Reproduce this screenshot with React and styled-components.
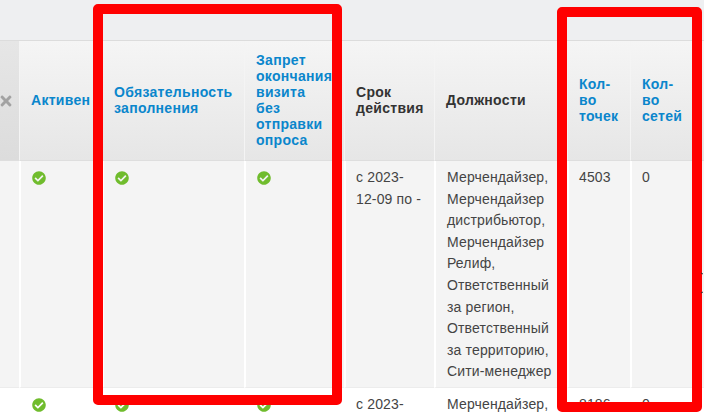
import React from 'react';
import styled, { createGlobalStyle } from 'styled-components';
import { FaCheckCircle, FaTimes } from 'react-icons/fa';

const GlobalStyle = createGlobalStyle`
  html, body {
    margin: 0;
    padding: 0;
    background: #fff;
    overflow: hidden;
  }
`;

const Page = styled.div`
  position: relative;
  width: 704px;
  height: 413px;
  overflow: hidden;
  background: #eeeff1;
  font-family: "Liberation Sans", Arial, sans-serif;
`;

const TableArea = styled.div`
  padding-top: 40px;
`;

const Table = styled.table`
  table-layout: fixed;
  width: 704px;
  border-collapse: separate;
  border-spacing: 0;
  background: #fff;
  border-top: 1px solid #dcdcdc;
`;

const HeadCell = styled.th`
  height: 120px;
  box-sizing: border-box;
  padding: 10px 0 12px 11px;
  text-align: left;
  vertical-align: middle;
  font-size: 14px;
  line-height: 16px;
  font-weight: 700;
  letter-spacing: 0.3px;
  color: ${props => (props.$link ? '#0a86cc' : '#333')};
  background: linear-gradient(#f5f5f5, #e6e6e6);
  border-left: 1px solid #f4f4f4;
  border-bottom: 1px solid #dedede;
`;

const HeadLine = styled.span`
  display: block;
  white-space: nowrap;
`;

const ActionHead = styled(HeadCell)`
  padding: 0;
  background: linear-gradient(#e6e6e6, #dcdcdc);
  border-left: 0;
  color: #a2a2a2;
  font-size: 16px;
  overflow: hidden;
`;

const Cell = styled.td`
  box-sizing: border-box;
  padding: 6px 10px 4px ${props => (props.$wide ? 11 : 10)}px;
  vertical-align: top;
  font-size: 14px;
  line-height: 21.6px;
  letter-spacing: 0.15px;
  color: #444;
  background: ${props => (props.$plain ? '#fff' : '#f4f4f4')};
  border-left: 2px solid #fff;
  border-bottom: 1px solid ${props => (props.$plain ? '#fff' : '#ececec')};
`;

const FirstCell = styled(Cell)`
  padding: 0;
  border-left: 0;
`;

const RemoveIcon = styled(FaTimes)`
  display: block;
  margin-left: -2px;
`;

const CheckIcon = styled(FaCheckCircle)`
  display: block;
  margin-top: 4px;
  margin-left: 1px;
  width: 14px;
  height: 14px;
  color: #70bc2d;
`;

const Highlight = styled.div`
  position: absolute;
  left: ${props => props.$left}px;
  top: ${props => props.$top}px;
  width: ${props => props.$width}px;
  height: ${props => props.$height}px;
  box-sizing: border-box;
  border: 10px solid #ff0000;
  border-radius: 5px;
`;

const CursorMark = styled.svg`
  position: absolute;
  left: 699px;
  top: 270px;
`;

const columns = [
  { lines: ['Активен'], link: true, width: 83 },
  { lines: ['Обязательность', 'заполнения'], link: true, width: 142 },
  { lines: ['Запрет', 'окончания', 'визита', 'без', 'отправки', 'опроса'], link: true, width: 100 },
  { lines: ['Срок', 'действия'], width: 90 },
  { lines: ['Должности'], width: 133 },
  { lines: ['Кол-', 'во', 'точек'], link: true, width: 63 },
  { lines: ['Кол-', 'во', 'сетей'], link: true, width: 74 },
];

const positions =
  'Мерчендайзер, Мерчендайзер дистрибьютор, Мерчендайзер Релиф, Ответственный за регион, Ответственный за территорию, Сити-менеджер';

const rows = [
  { period: 'с 2023-12-09 по -', points: '4503', nets: '0' },
  { period: 'с 2023-12-09 по -', points: '8186', nets: '0', plain: true },
];

const App = () => (
  <Page>
    <GlobalStyle />
    <TableArea>
      <Table>
        <colgroup>
          <col style={{ width: 19 }} />
          {columns.map(column => (
            <col key={column.lines.join()} style={{ width: column.width }} />
          ))}
        </colgroup>
        <thead>
          <tr>
            <ActionHead><RemoveIcon /></ActionHead>
            {columns.map(column => (
              <HeadCell key={column.lines.join()} $link={column.link}>
                {column.lines.map(line => (
                  <HeadLine key={line}>{line}</HeadLine>
                ))}
              </HeadCell>
            ))}
          </tr>
        </thead>
        <tbody>
          {rows.map(row => (
            <tr key={row.points}>
              <FirstCell $plain={row.plain} />
              <Cell $plain={row.plain}><CheckIcon /></Cell>
              <Cell $plain={row.plain}><CheckIcon /></Cell>
              <Cell $plain={row.plain}><CheckIcon /></Cell>
              <Cell $plain={row.plain}>{row.period}</Cell>
              <Cell $plain={row.plain} $wide>{positions}</Cell>
              <Cell $plain={row.plain}>{row.points}</Cell>
              <Cell $plain={row.plain}>{row.nets}</Cell>
            </tr>
          ))}
        </tbody>
      </Table>
    </TableArea>
    <Highlight $left={93} $top={4} $width={249} $height={401} />
    <Highlight $left={557} $top={7} $width={145} $height={405} />
    <CursorMark width="5" height="26" viewBox="0 0 5 26">
      <path d="M2 3l2 1M2 23l2 -1" stroke="#333" strokeWidth="1" fill="none" />
    </CursorMark>
  </Page>
);

export default App;
